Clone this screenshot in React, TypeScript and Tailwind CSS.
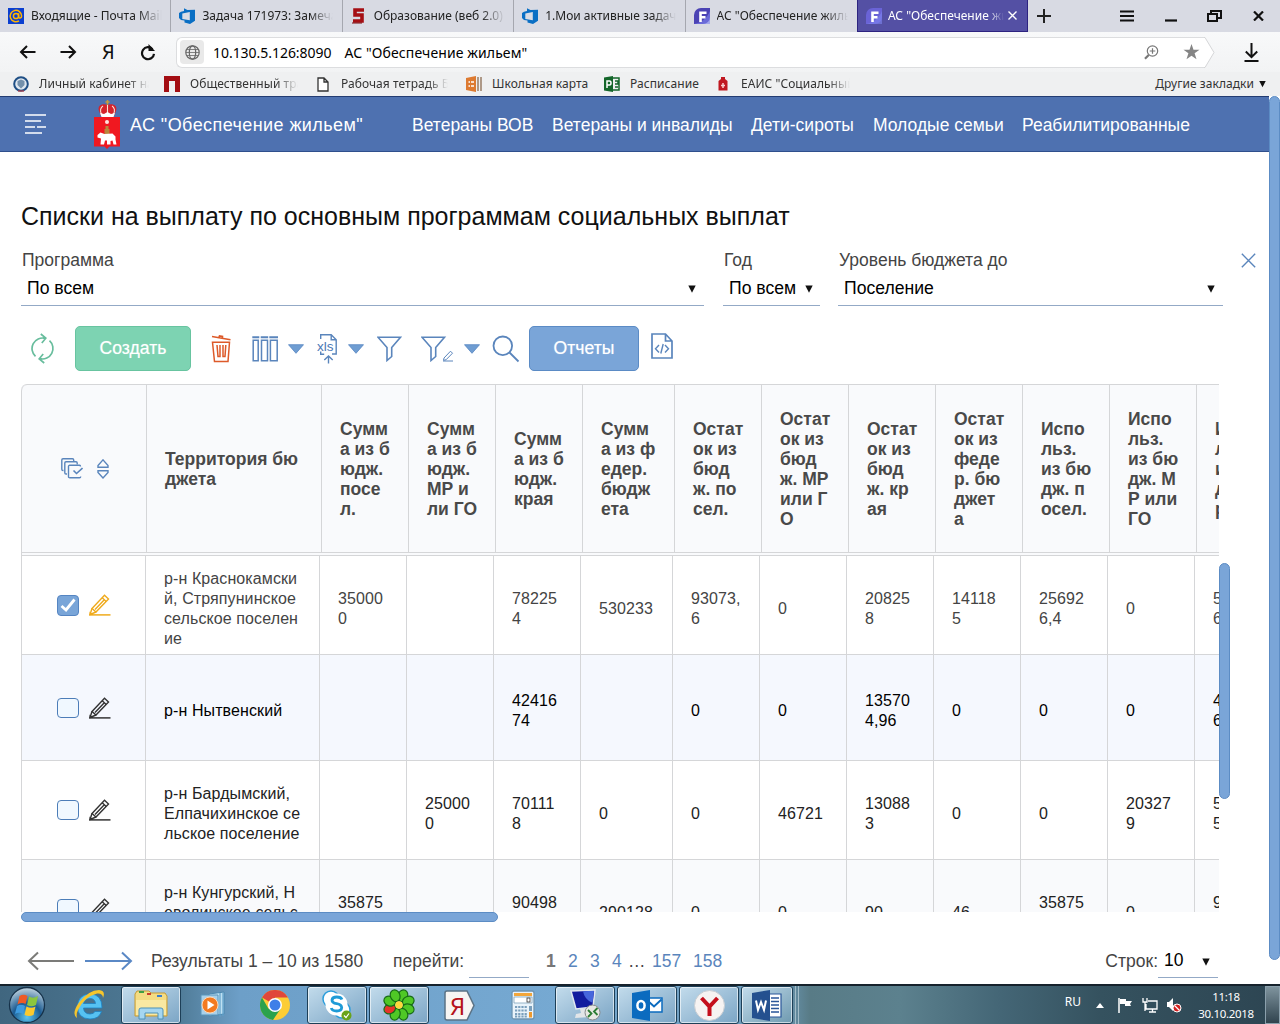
import React from 'react';

type IconProps = { className?: string };

/* ---------- browser icons ---------- */

const MailIcon = () => (
  <svg width="16" height="16" viewBox="0 0 16 16" className="shrink-0">
    <rect width="16" height="16" fill="#0b3fd0" />
    <g fill="none" stroke="#ffb400" strokeWidth="1.5">
      <circle cx="8" cy="8" r="2.6" />
      <path d="M10.6 5.3v3.6c0 1.6 3 1.6 3-1A5.7 5.7 0 1 0 11 12.8" />
    </g>
  </svg>
);

const DevopsIcon = () => (
  <svg width="16" height="16" viewBox="0 0 16 16" className="shrink-0">
    <path d="M0 5l2-1.200 3-.8V.3L8.500 2 16 1.800v11L11 16l-5.500-1.500v-2L2 12 0 10z" fill="#0a6fc4" />
    <path d="M3.300 5.500L10.800 4v8.300l-7.500-1.200z" fill="#dadde5" />
  </svg>
);

const FiveIcon = () => (
  <svg width="16" height="16" viewBox="0 0 16 16" className="shrink-0">
    <path d="M13 2H4v5h7v6H2" fill="none" stroke="#a50f14" strokeWidth="3.6" />
    <path d="M1 15h10" stroke="#7d0a0e" strokeWidth="1" />
  </svg>
);

const FIcon = ({ active = false }: { active?: boolean }) => (
  <svg width="16" height="16" viewBox="0 0 16 16" className="shrink-0">
    <path d="M0 16V7a7 7 0 0 1 7-7h9v9a7 7 0 0 1-7 7z" fill={active ? '#6a63d6' : '#4b43b4'} />
    <path d="M0 16c6-1 13-5 16-13v13z" fill="#7f86f0" opacity="0.6" />
    <path d="M6.500 14V4.700h6M6.500 9.300h5" fill="none" stroke="#fff" strokeWidth="2.600" />
  </svg>
);

const CloseX = ({ className = '' }: IconProps) => (
  <svg width="9" height="9" viewBox="0 0 9 9" className={className}>
    <path d="M.5.5l8 8M8.500.5l-8 8" stroke="currentColor" strokeWidth="1.400" vectorEffect="non-scaling-stroke" />
  </svg>
);

const ArrowLeft = () => (
  <svg width="17" height="14" viewBox="0 0 17 14"><path d="M16.500 7H2M8 1L2 7l6 6" fill="none" stroke="#111" strokeWidth="2" /></svg>
);
const ArrowRight = () => (
  <svg width="17" height="14" viewBox="0 0 17 14"><path d="M.5 7H15M9 1l6 6-6 6" fill="none" stroke="#111" strokeWidth="2" /></svg>
);
const Reload = () => (
  <svg width="16" height="17" viewBox="0 0 16 17">
    <path d="M12.500 5.200A6 6 0 1 0 14 9.800" fill="none" stroke="#111" strokeWidth="2.200" />
    <path d="M8.500 0v7H15z" fill="#111" />
  </svg>
);

/* ---------- app icons ---------- */

const Crest = () => (
  <svg width="27" height="49" viewBox="0 0 27 49">
    <path d="M13.500 0v5M11.500 2h4" stroke="#c99a3a" strokeWidth="1.500" />
    <path d="M5 11C3 6 8 3 13.500 5c5.500-2 10.500 1 8.500 6l-2 5H7z" fill="#d5242c" />
    <path d="M8 15c-3-4-1-8 1-9M19 15c3-4 1-8-1-9M13.500 5v10" stroke="#f6e5d8" strokeWidth="1.100" fill="none" />
    <path d="M6 13l4 1 3.500-2 3.500 2 4-1-1.500 4h-12z" fill="#fff" />
    <path d="M0 17h26v29.500H15.500L13 49l-2.500-2.500H0z" fill="#f01820" />
    <circle cx="13" cy="22" r="2" fill="#ffe3dd" />
    <path d="M11.500 26h3v3h1v6h-5v-6h1z" fill="#b8863c" />
    <path d="M3.500 35l3-2.500 4 1.500 8-.5 3 3v3l1 5h-3l-1-4-2 .5v3.500h-3.500v-4H11l-1 4H6.500l.5-6-3.500-1z" fill="#fff" />
  </svg>
);

const Refresh = () => (
  <svg width="24" height="31" viewBox="0 0 24 31" fill="none" stroke="#68bd9d" strokeWidth="1.700">
    <path d="M4.500 23.300A10.500 10.500 0 0 1 14 5.300M9.800 1l5 4.200-4 4.800" />
    <path d="M18.500 7.700A10.500 10.500 0 0 1 9 25.700M13.200 30l-5-4.200 4-4.800" />
  </svg>
);

const Trash = () => (
  <svg width="21" height="28" viewBox="0 0 21 28" fill="none" stroke="#dd5a2a" strokeWidth="1.600">
    <path d="M1 1.500l18.500 3.300M8 2.500l.5-1.500 3 .500-.2 1.800" />
    <path d="M1.500 7.300h17L17 26.500H3.500zM6 10l1 11.500h2V10M12 10v11.500h2L14.800 10" strokeWidth="1.500" />
  </svg>
);

const Columns = () => (
  <svg width="27" height="26" viewBox="0 0 27 26" fill="none" stroke="#5a85bc" strokeWidth="1.500">
    <path d="M.3 1.200h7M8.700 1.200h7.500M17.300 1.200h8.700" strokeWidth="1.900" />
    <path d="M1.200 4.200h5v20.600h-5zM9.500 4.200h6v20.600h-6zM18.400 4.200h6.800v20.600h-6.800z" />
  </svg>
);

const Caret = ({ className = '' }: IconProps) => (
  <svg width="16" height="10" viewBox="0 0 16 10" className={className}>
    <path d="M.5.700h15L8 9.300z" fill="#6f9dd2" stroke="#5585c2" strokeWidth=".8" />
  </svg>
);

const Xls = () => (
  <svg width="22" height="30" viewBox="0 0 22 30" fill="none" stroke="#5a85bc" strokeWidth="1.400" overflow="visible">
    <path d="M3.700 5V.700h10.500l5 5V20H15M3.700 17.500v2.800h3.500M14.200.700v5h5" />
    <path d="M11.500 29.500v-7.500M7.300 26l4.200-4 4.200 4" />
    <text x="0" y="16.500" fontSize="13.500" fontFamily="Liberation Sans, sans-serif" fill="#4c79b5" stroke="none">xls</text>
  </svg>
);

const Filter = () => (
  <svg width="25" height="26" viewBox="0 0 25 26" fill="none" stroke="#5a85bc" strokeWidth="1.600">
    <path d="M1 1.200h22.500L14.700 11.500v9L10 24.500v-13z" />
  </svg>
);

const FilterEdit = () => (
  <svg width="33" height="26" viewBox="0 0 33 26" fill="none" stroke="#5a85bc" strokeWidth="1.600">
    <path d="M1 1.200h22.500L14.700 11.500v9L10 24.500v-13z" />
    <path d="M23 22l6.500-6.800 2 2-6.500 6.600-2.500.5zM22 25h10" strokeWidth="1" />
  </svg>
);

const Search = () => (
  <svg width="28" height="28" viewBox="0 0 28 28" fill="none" stroke="#5a85bc" strokeWidth="1.800">
    <circle cx="10.800" cy="10.800" r="9.300" />
    <path d="M17.500 17.500l9 9" />
  </svg>
);

const CodeFile = () => (
  <svg width="23" height="27" viewBox="0 0 23 27" fill="none" stroke="#5a85bc" strokeWidth="1.700">
    <path d="M1 1h13.500l6.500 7v17H1zM14.500 1v7H21" />
    <path d="M8 12l-3.500 3.800L8 19.500M14 12l3.500 3.800L14 19.500M12.200 11l-2.400 9.500" strokeWidth="1.400" />
  </svg>
);

const Stack = () => (
  <svg width="22" height="21" viewBox="0 0 22 21" fill="none" stroke="#5a85bc" strokeWidth="1.400">
    <path d="M2.500 12.500H2a1.200 1.200 0 0 1-1.200-1.200V2A1.200 1.200 0 0 1 2 .800h9.500A1.200 1.200 0 0 1 12.700 2v1" />
    <path d="M6 16H5a1.200 1.200 0 0 1-1.200-1.200V5A1.200 1.200 0 0 1 5 3.800h10A1.200 1.200 0 0 1 16.200 5v1.500" />
    <path d="M19.500 8.500A1.200 1.200 0 0 0 18.500 7.300H9A1.200 1.200 0 0 0 7.500 8.500v10A1.200 1.200 0 0 0 9 19.800h9.500a1.200 1.200 0 0 0 1.200-1.200" />
    <path d="M12.500 12.500l3 3 6-5.500" strokeWidth="1.600" />
  </svg>
);

const Sort = () => (
  <svg width="12" height="20" viewBox="0 0 12 20" fill="none" stroke="#5a85bc" strokeWidth="1.400">
    <path d="M1 8.300V6.500L6 .900l5 5.600v1.800zM1 11.700v1.800L6 19l5-5.500v-1.800z" />
  </svg>
);

const Pencil = ({ className = '' }: IconProps) => (
  <svg width="22" height="22" viewBox="0 0 22 22" fill="none" stroke="currentColor" strokeWidth="1.400" className={className}>
    <path d="M3 14.500L15.500 1.200l4 3.800L7 18zM13.200 3.700l4 3.800M6 15.500L15.300 5.800" />
    <path d="M3 14.500l-2 6 6-2.500" />
    <path d="M.5 20.900h21" strokeWidth="1.500" />
    <path d="M.5 17.500v3.500h4z" fill="currentColor" stroke="none" />
  </svg>
);

const SmallTriangle = ({ className = '' }: IconProps) => (
  <svg width="8" height="8" viewBox="0 0 8 8" className={className}><path d="M.3.500h7.400L4 7.800z" fill="#111" /></svg>
);

/* ---------- browser chrome ---------- */

const tabs = [
  { icon: <MailIcon />, text: 'Входящие - Почта Mail.Ru' },
  { icon: <DevopsIcon />, text: 'Задача 171973: Замечания' },
  { icon: <FiveIcon />, text: 'Образование (веб 2.0)' },
  { icon: <DevopsIcon />, text: '1.Мои активные задачи' },
  { icon: <FIcon />, text: 'АС "Обеспечение жильем"' },
];

const TabStrip = () => (
  <div className="flex h-8 bg-[#d8dae3] text-[12px] text-[#222]">
    {tabs.map((t, i) => (
      <div key={i} className={`flex w-[171.400px] items-center overflow-hidden pl-2 ${i < 4 ? 'border-r border-[#a5a7af]' : ''}`}>
        {t.icon}
        <span className="ml-[7px] w-[131px] overflow-hidden whitespace-nowrap [mask-image:linear-gradient(to_right,#000_82%,transparent)]">{t.text}</span>
      </div>
    ))}
    <div className="flex w-[171px] items-center border border-t-0 border-[#2d2380] bg-[#5450a4] pl-2 text-white">
      <FIcon active />
      <span className="ml-[6px] w-[116px] overflow-hidden whitespace-nowrap [mask-image:linear-gradient(to_right,#000_86%,transparent)]">АС "Обеспечение жильем"</span>
      <CloseX className="ml-[4px]" />
    </div>
    <div className="flex flex-1 items-center justify-between pr-4 pl-[9px] text-[#111]">
      <svg width="14" height="14" viewBox="0 0 14 14"><path d="M7 0v14M0 7h14" stroke="#222" strokeWidth="2" /></svg>
      <div className="flex items-center">
        <svg width="14" height="12" viewBox="0 0 14 12"><path d="M0 1.500h14M0 6h14M0 10.500h14" stroke="#111" strokeWidth="2" /></svg>
        <svg width="12" height="12" viewBox="0 0 12 12" className="ml-[31px]"><path d="M0 10.500h12" stroke="#111" strokeWidth="2.200" /></svg>
        <svg width="15" height="12" viewBox="0 0 15 12" className="ml-[30px]" fill="none" stroke="#111" strokeWidth="2"><path d="M1 4h9v7H1zM4 4V1h10v7h-4" /></svg>
        <svg width="11" height="10" viewBox="0 0 11 10" className="ml-[31px]"><path d="M1 .5l9 9M10 .5l-9 9" stroke="#111" strokeWidth="2.200" /></svg>
      </div>
    </div>
  </div>
);

const AddressBar = () => (
  <div className="flex h-10 items-center bg-gradient-to-b from-[#f8f9fa] to-[#f2f3f4] pl-[19px]">
    <ArrowLeft />
    <div className="w-[24px]" />
    <ArrowRight />
    <span className="ml-[25px] w-[12px] text-[20px] leading-none text-[#111]">Я</span>
    <div className="w-[26px]" />
    <Reload />
    <div className="ml-5 flex h-[31px] flex-1 items-center rounded-l-md border border-r-0 border-[#dcdddf] bg-white pl-[3px]">
      <div className="flex size-6 items-center justify-center rounded-sm bg-[#e9e9e9]">
        <svg width="15" height="15" viewBox="0 0 15 15" fill="none" stroke="#666" strokeWidth="1.200">
          <circle cx="7.500" cy="7.500" r="6.700" /><ellipse cx="7.500" cy="7.500" rx="3.200" ry="6.700" /><path d="M1 7.500h13M2 4.500h11M2 10.500h11" strokeWidth=".8" />
        </svg>
      </div>
      <span className="ml-[9px] text-[14px] tracking-[-0.04px] text-black">10.130.5.126:8090</span>
      <span className="ml-[13px] text-[14px] tracking-[0.1px] text-black">АС "Обеспечение жильем"</span>
      <svg width="15" height="15" viewBox="0 0 15 15" className="ml-auto" fill="none" stroke="#777" strokeWidth="1.200">
        <circle cx="8.500" cy="6" r="5.200" /><path d="M8.500 3.200v5.600M5.700 6h5.600" /><path d="M4.700 10L1 13.800" strokeWidth="2.200" />
      </svg>
      <svg width="17" height="16" viewBox="0 0 17 16" className="mr-[4px] ml-6"><path d="M8.500 0l2 5.700h6l-4.900 3.600 1.900 6-5-3.600-5 3.600 1.900-6L.5 5.700h6z" fill="#858585" /></svg>
    </div>
    <svg width="11" height="31" viewBox="0 0 11 31"><path d="M0 .5h1l9 15-9 15H0" fill="#fff" stroke="#d4d5d7" /></svg>
    <svg width="15" height="19" viewBox="0 0 15 19" className="mr-[21px] ml-[29px]" fill="none" stroke="#111" strokeWidth="2"><path d="M7.500 0v14M1.800 8.500l5.700 5.700 5.700-5.700M.5 18h14" /></svg>
  </div>
);

const Bookmark = ({ icon, text, className, fade }: { icon: React.ReactNode; text: string; className: string; fade?: boolean }) => (
  <div className={`flex shrink-0 items-center ${className}`}>
    {icon}
    <span className={`flex-1 overflow-hidden whitespace-nowrap ${fade ? '[mask-image:linear-gradient(to_right,#000_80%,transparent)]' : ''}`}>{text}</span>
  </div>
);

const Bookmarks = () => (
  <div className="flex h-6 items-center bg-[#eff0f1] pl-[13px] text-[12px] tracking-[0.05px] text-[#333]">
    <Bookmark fade className="w-[151px] gap-[10px] pr-[15px]" text="Личный кабинет налог" icon={
      <svg width="16" height="16" viewBox="0 0 16 16"><circle cx="8" cy="8" r="6.800" fill="#dfe7ef" stroke="#1f4f85" strokeWidth="2" /><path d="M4.500 5l3.500-1.500L11.500 5v4L8 12.500 4.500 9z" fill="#7390ab" /><path d="M5 15h6" stroke="#c33" /></svg>} />
    <Bookmark fade className="w-[152px] gap-[10px] pr-[18px]" text="Общественный транс" icon={
      <svg width="16" height="16" viewBox="0 0 16 16"><path d="M0 0h16v16h-5V5H5v11H0z" fill="#a30d12" /></svg>} />
    <Bookmark fade className="w-[150px] gap-[12px] pr-[18px]" text="Рабочая тетрадь БД" icon={
      <svg width="12" height="15" viewBox="0 0 12 15" className="ml-[1px]" fill="#fff" stroke="#333" strokeWidth="1.300"><path d="M1 1h6l4 4v9H1zM7 1v4h4" /></svg>} />
    <Bookmark className="w-[138px] gap-[10px]" text="Школьная карта" icon={
      <svg width="16" height="16" viewBox="0 0 16 16"><path d="M0 2l10-2v16L0 14z" fill="#dd7a31" /><path d="M2.500 6h1.500M5 6h3M2.500 10h1.500M5 10h3" stroke="#fff" strokeWidth="1.500" /><path d="M12 1v14M15 1v14" stroke="#8b6b50" strokeWidth="1.300" /></svg>} />
    <Bookmark className="w-[114px] gap-[10px]" text="Расписание" icon={
      <svg width="16" height="16" viewBox="0 0 16 16"><path d="M0 1.500L9 0v16l-9-1.500z" fill="#14662a" /><path d="M9 2h6v12H9M11 5h3v3h-3M11 11h3" fill="none" stroke="#14662a" strokeWidth="1.500" /><path d="M3 12V5h2.500q1.500 0 1.500 2T5.500 9H3" fill="none" stroke="#fff" strokeWidth="1.500" /></svg>} />
    <Bookmark fade className="w-[132px] gap-[13px]" text={'ЕАИС "Социальный'} icon={
      <svg width="10" height="16" viewBox="0 0 10 16"><path d="M3 1h4v2l2.500 2v9.500h-9V5L3 3z" fill="#c01820" /><path d="M5 7v5M3 9.500h4" stroke="#f8d0d0" strokeWidth="1.500" /></svg>} />
    <span className="mr-[5px] ml-auto">Другие закладки</span>
    <SmallTriangle className="mr-[14px] w-[7px]" />
  </div>
);

/* ---------- application ---------- */

const AppHeader = () => (
  <header className="flex h-14 w-[1269px] items-center border-t border-b border-t-[#233c72] border-b-[#2f4f8c] bg-[#4e71b0] text-[17.500px] text-white">
    <svg width="22" height="20" viewBox="0 0 22 20" className="ml-[25px]" stroke="#fff" strokeWidth="1.500"><path d="M0 1h21M0 7h16M0 13h10M12 13h9M0 19h17" /></svg>
    <div className="ml-[47px]"><Crest /></div>
    <span className="mt-[2px] ml-[9px] w-[282px] text-[18px] tracking-[0.42px]">АС "Обеспечение жильем"</span>
    <nav className="mt-[2px] flex whitespace-nowrap">
      <span className="w-[140px]">Ветераны ВОВ</span>
      <span className="w-[199px]">Ветераны и инвалиды</span>
      <span className="w-[122px]">Дети-сироты</span>
      <span className="w-[149px]">Молодые семьи</span>
      <span>Реабилитированные</span>
    </nav>
  </header>
);

const Field = ({ label, value, className, arrow }: { label: string; value: string; className: string; arrow: string }) => (
  <div className={className}>
    <div className="h-[22px] pl-px text-[17.500px] leading-[22px] whitespace-nowrap text-[#444]">{label}</div>
    <div className="mt-[2px] flex h-[33px] items-center border-b border-[#93a9c6] pb-[2px] pl-[6px] text-[17.600px] text-black">
      <span>{value}</span>
      <SmallTriangle className={`mt-[2px] ml-auto ${arrow}`} />
    </div>
  </div>
);

const Toolbar = () => (
  <div className="mt-5 ml-[31px] flex h-[45px] items-center">
    <Refresh />
    <button className="ml-5 h-[45px] w-[116px] rounded-[5px] border border-[#68c4a0] bg-[#7dd3b2] text-[17.600px] text-white [text-shadow:0_0_1px_rgba(255,255,255,0.5)]">Создать</button>
    <div className="ml-5"><Trash /></div>
    <div className="ml-5"><Columns /></div>
    <Caret className="ml-[9px]" />
    <div className="ml-[13px]"><Xls /></div>
    <Caret className="ml-[9px]" />
    <div className="ml-[13px]"><Filter /></div>
    <div className="ml-[19px]"><FilterEdit /></div>
    <Caret className="ml-[10px]" />
    <div className="ml-[12px]"><Search /></div>
    <button className="ml-[9px] h-[45px] w-[110px] rounded-[5px] border border-[#5b8bc5] bg-[#7aa5d8] text-[17.600px] text-white [text-shadow:0_0_1px_rgba(255,255,255,0.5)]">Отчеты</button>
    <div className="mb-[5px] ml-[12px]"><CodeFile /></div>
  </div>
);

const headers = [
  'Территория бю\nджета',
  'Сумм\nа из б\nюдж.\nпосе\nл.',
  'Сумм\nа из б\nюдж.\nМР и\nли ГО',
  'Сумм\nа из б\nюдж.\nкрая',
  'Сумм\nа из ф\nедер.\nбюдж\nета',
  'Остат\nок из\nбюд\nж. по\nсел.',
  'Остат\nок из\nбюд\nж. МР\nили Г\nО',
  'Остат\nок из\nбюд\nж. кр\nая',
  'Остат\nок из\nфеде\nр. бю\nджет\nа',
  'Испо\nльз.\nиз бю\nдж. п\nосел.',
  'Испо\nльз.\nиз бю\nдж. М\nР или\nГО',
  'Испо\nльз.\nиз бю\nдж. к\nрая',
];

type Row = { style: string; cell: string; checked?: boolean; cells: string[] };

const rows: Row[] = [
  { style: 'h-[99px] bg-white text-[#444]', cell: 'pt-[8px]', checked: true, cells: ['р-н Краснокамски\nй, Стряпунинское\nсельское поселен\nие', '35000\n0', '', '78225\n4', '530233', '93073,\n6', '0', '20825\n8', '14118\n5', '25692\n6,4', '0', '57399\n6'] },
  { style: 'h-[106px] bg-[#f5f8fe] text-black', cell: 'pt-[6px]', cells: ['р-н Нытвенский', '', '', '42416\n74', '', '0', '0', '13570\n4,96', '0', '0', '0', '41059\n69,04'] },
  { style: 'h-[99px] bg-white text-[#222]', cell: 'pt-[8px]', cells: ['р-н Бардымский,\nЕлпачихинское се\nльское поселение', '', '25000\n0', '70111\n8', '0', '0', '46721', '13088\n3', '0', '0', '20327\n9', '57023\n5'] },
  { style: 'h-[99px] bg-[#f9fafc] text-[#222]', cell: 'pt-[8px]', cells: ['р-н Кунгурский, Н\nеволинское сельс\nкое поселение', '35875\n0', '', '90498\n0', '290128', '0', '0', '90', '46', '35875\n0', '0', '90489\n0'] },
];

const Table = () => (
  <div className="relative mt-[13px] ml-[21px] h-[538px] w-[1209px]">
    <div className="h-[528px] w-[1198px] overflow-hidden">
      <div className="grid h-[169px] w-[1270px] grid-cols-[125px_175px_87px_87px_87px_92px_87px_87px_87px_87px_87px_87px_95px] rounded-tl-md border-t border-b border-[#d5d6d8] bg-[#f9fafc] text-[17.500px] leading-5 font-bold text-[#494949]">
        <div className="flex items-center rounded-tl-md border-l border-[#d5d6d8] pl-[39px]">
          <Stack />
          <div className="ml-[14px]"><Sort /></div>
        </div>
        {headers.map((h, i) => (
          <div key={i} className="flex items-center border-l border-[#d5d6d8] pl-[18px] whitespace-pre">{h}</div>
        ))}
      </div>
      <div className="h-[2px] border-l border-[#d5d6d8] bg-[#f9fafc]" />
      <div className="w-[1270px] border-t border-[#d5d6d8] text-[16px] leading-5 tracking-[0.1px]">
        {rows.map((r, i) => (
          <div key={i} className={`grid grid-cols-[124px_174px_87px_87px_87px_92px_87px_87px_87px_87px_87px_87px_97px] border-b border-[#d5d6d8] ${r.style}`}>
            <div className="flex items-center border-l border-[#d5d6d8] pl-[35px]">
              {r.checked ? (
                <div className="flex h-[21px] w-[22px] items-center justify-center rounded-[4px] border border-[#5585c2] bg-[#79a5d8]">
                  <svg width="16" height="14" viewBox="0 0 16 14"><path d="M1.500 8l4.500 4L14.500 1.500" fill="none" stroke="#fff" strokeWidth="2.800" /></svg>
                </div>
              ) : (
                <div className="h-[20px] w-[22px] rounded-[4px] border border-[#4c7db8] bg-[#f0f8ff]" />
              )}
              <Pencil className={`ml-[10px] ${r.checked ? 'text-[#efaa1c]' : 'text-[#333]'}`} />
            </div>
            {r.cells.map((c, j) => (
              <div key={j} className={`flex items-center border-l border-[#d5d6d8] pl-[18px] whitespace-pre ${r.cell}`}>{c}</div>
            ))}
          </div>
        ))}
      </div>
    </div>
    <div className="absolute top-[179px] right-0 h-[236px] w-[11px] rounded-full border border-[#5c8cc4] bg-[#7aa5d8]" />
    <div className="absolute bottom-0 left-0 h-[10px] w-[477px] rounded-full border border-[#5c8cc4] bg-[#7aa5d8]" />
  </div>
);

const Pager = () => (
  <div className="mt-[26px] ml-[27px] flex h-[30px] items-center pb-[4px] text-[17.500px] text-[#444]">
    <svg width="48" height="20" viewBox="0 0 48 20" fill="none" stroke="#7b7b78" strokeWidth="2"><path d="M47 10H2M11 1.500L2 10l9 8.500" /></svg>
    <svg width="48" height="20" viewBox="0 0 48 20" fill="none" stroke="#5a88c5" strokeWidth="2" className="ml-[10px]"><path d="M0 10h45M37 1.500l9 8.500-9 8.500" /></svg>
    <span className="ml-[18px] w-[242px] whitespace-nowrap">Результаты 1 – 10 из 1580</span>
    <span className="w-[76px]">перейти:</span>
    <div className="mt-[32px] h-px w-[60px] bg-[#93a9c6]" />
    <span className="ml-[17px] w-[22px] font-bold text-[#777]">1</span>
    <div className="flex text-[#5a85bc]">
      <span className="w-[22px]">2</span><span className="w-[22px]">3</span><span className="w-[16px]">4</span>
      <span className="w-[24px] text-[#444]">…</span><span className="w-[41px]">157</span><span>158</span>
    </div>
    <span className="ml-auto">Строк:</span>
    <div className="mr-[62px] flex h-[34px] w-[60px] items-center border-b border-[#93a9c6] pl-[6px] text-black">
      10<SmallTriangle className="mt-[2px] mr-[8px] ml-auto" />
    </div>
  </div>
);

/* ---------- taskbar ---------- */

const Slot = ({ children, open }: { children: React.ReactNode; open?: boolean }) => (
  <div className={`mr-[2px] flex h-[38px] w-[60px] items-center justify-center rounded-[3px] ${open ? 'border border-[#1d3f57] bg-gradient-to-br from-[#c3dcec] to-[#7ba5c5] shadow-[inset_0_0_0_1px_rgba(255,255,255,0.6)]' : ''}`}>{children}</div>
);

const Taskbar = () => (
  <div className="flex h-10 items-start border-t-2 border-t-[#16222c] bg-[linear-gradient(to_right,#40667f_0,#507c98_180px,#6d9fc8_240px,#76a9d2_560px,#6d9ab8_780px,#587b86_810px,#5c818e_900px,#446676_1000px,#35525f_1100px,#2d4552_1280px)] text-white">
    <div className="flex h-[38px] w-[59px] items-center pl-2">
      <svg width="38" height="38" viewBox="0 0 38 38">
        <defs><radialGradient id="orb" cx="0.5" cy="0.85" r="0.8"><stop offset="0" stopColor="#5cc5ef" /><stop offset="0.5" stopColor="#1c5c93" /><stop offset="1" stopColor="#b3c9d8" /></radialGradient></defs>
        <circle cx="19" cy="19" r="17.500" fill="url(#orb)" stroke="#16324a" strokeWidth="1.300" />
        <path d="M11.500 10q4-2.500 8 0l-2 8q-4-2-8 .5z" fill="#ee5a26" />
        <path d="M21 10.500q4 2.500 9-.5l-2 9q-4.500 2.500-9 0z" fill="#8cc63e" />
        <path d="M9 20q4-2.500 8 0l-2 8q-4-2.500-8 0z" fill="#3e9be0" />
        <path d="M18.500 20.500q4.500 2.500 9 0l-2 8.500q-4.500 2-9 0z" fill="#fcc92d" />
      </svg>
    </div>
    <Slot>
      <svg width="34" height="32" viewBox="0 0 34 32">
        <path d="M30 19H11.500q.5 6 6.500 6 3.500 0 5-2.500h6.500Q27 30 18 30 5.500 29.500 5.500 17.500 6 5.500 18 5 30 5 30 19zm-6.500-4.500q-.5-5-5.700-5-5.300.2-6.300 5z" fill="#56c2f2" stroke="#1d83c4" strokeWidth=".8" />
        <path d="M5 29Q-1 25 7 13.500 17 1 27 1q7 .5 4 8 0-5-6-4.500Q12 8 6 21q-2 4-1 8z" fill="#f7c62c" />
      </svg>
    </Slot>
    <Slot open>
      <svg width="34" height="30" viewBox="0 0 34 30">
        <path d="M1 4l2-3h12l2 2h14l2 3v20H1z" fill="#f4dc83" stroke="#c69a34" />
        <path d="M5 2h5" stroke="#3f9f43" strokeWidth="2" /><path d="M13 4h4" stroke="#cc3b2c" strokeWidth="2" /><path d="M23 6h5" stroke="#3b7ecb" strokeWidth="2" />
        <path d="M2 10h30v15H2z" fill="#f9e8a2" />
        <path d="M5 29v-9q0-2 2-2h20q2 0 2 2v9h-5v-6H11v6z" fill="#a5d6f0" stroke="#4d91b8" />
      </svg>
    </Slot>
    <Slot>
      <svg width="28" height="28" viewBox="0 0 28 28">
        <path d="M10 3l15-2v22l-15 2z" fill="#bde0f2" stroke="#4b88b0" /><path d="M21 2v24M24 2v23" stroke="#5f9fc8" strokeWidth="1.200" /><path d="M2 4h17v20H2z" fill="#a9d1ea" stroke="#5995ba" />
        <circle cx="11" cy="14" r="8" fill="#f37a20" stroke="#fbd9ba" /><path d="M8.500 9.500l7 4.500-7 4.500z" fill="#fff" />
      </svg>
    </Slot>
    <Slot>
      <svg width="30" height="30" viewBox="0 0 30 30">
        <circle cx="15" cy="15" r="15" fill="#fccd35" />
        <path d="M15 15L2 7.500A15 15 0 0 1 28 7.500H15z" fill="#e0473a" />
        <path d="M2 7.500A15 15 0 0 0 13 29.900L20.500 19 15 15 8.500 18.800z" fill="#2ba24c" />
        <circle cx="15" cy="15" r="7" fill="#fff" /><circle cx="15" cy="15" r="5.500" fill="#3f7fe8" />
      </svg>
    </Slot>
    <Slot open>
      <svg width="30" height="31" viewBox="0 0 30 31">
        <circle cx="9" cy="9" r="8" fill="#fff" stroke="#2b9ddb" strokeWidth="1.500" /><circle cx="20" cy="20" r="8" fill="#fff" stroke="#2b9ddb" strokeWidth="1.500" /><circle cx="14.500" cy="14.500" r="11" fill="#fff" />
        <path d="M20 9.500q-1-2.500-5.300-2.500t-4.700 3q0 3 4.700 3.700t5 4q-.3 3.300-5 3.300t-5.400-3" fill="none" stroke="#1e9bd7" strokeWidth="2.800" />
        <circle cx="24.500" cy="25.500" r="5" fill="#6aa31a" /><path d="M22 25.500l2 2 3-4" stroke="#fff" strokeWidth="1.200" fill="none" />
      </svg>
    </Slot>
    <Slot open>
      <svg width="34" height="34" viewBox="0 0 34 34">
        {[0, 45, 90, 135, 180, 225, 270, 315].map((a) => (
          <ellipse key={a} cx="17" cy="7" rx="4.800" ry="6" transform={`rotate(${a + 22.5} 17 17)`} fill={a === 225 ? '#e6342b' : '#4fc826'} stroke="#176b15" strokeWidth="1.200" />
        ))}
        <circle cx="17" cy="17" r="3.800" fill="#ffd83b" />
      </svg>
    </Slot>
    <Slot>
      <div className="relative mr-[1px] h-[31px] w-[33px]">
        <svg width="33" height="31" viewBox="0 0 33 31" className="absolute inset-0"><path d="M3 1h20l7 14.500L23 30H3q-2 0-2-2V3q0-2 2-2z" fill="#f7f5f3" stroke="#5b7386" strokeWidth="1.500" /></svg>
        <span className="absolute top-[1px] left-[6px] text-[24px] leading-[29px] text-[#b5121b]">Я</span>
      </div>
    </Slot>
    <Slot>
      <svg width="24" height="30" viewBox="0 0 24 30">
        <rect x="1" y="1" width="22" height="28" rx="2" fill="#e9f3fa" stroke="#6d94b2" strokeWidth="1.300" /><path d="M3 3h18v3H3z" fill="#f3a63a" /><path d="M3 7h18v6H3z" fill="#fff" stroke="#7ea3bc" strokeWidth=".8" />
        <path d="M4 17h12M4 20.500h12M4 24h12M4 26.500h12" stroke="#7a9fbc" strokeWidth="2" strokeDasharray="2.200 1" /><path d="M18 16h3v5h-3z" fill="#7a9fbc" /><path d="M18 22h3v5.500h-3z" fill="#ed992f" />
        <rect x="16" y="8" width="3" height="4" fill="none" stroke="#333" strokeWidth=".8" />
      </svg>
    </Slot>
    <Slot open>
      <svg width="32" height="32" viewBox="0 0 32 32">
        <path d="M2 2l24-1-2 17L7 20z" fill="#131c9e" stroke="#e2e8ef" strokeWidth="1.500" /><path d="M14 2.300l11-.5-1.500 12q-8-3-9.500-11.500z" fill="#4666dc" /><path d="M11 20l7-1 1 5 3 1-1 3-15 1 1-4 5-1z" fill="#e2e5e8" />
        <circle cx="23.500" cy="23.500" r="7.500" fill="#e8e8e3" stroke="#85898c" /><path d="M19 21l3.500 3.500L19 28M28.500 19L25 22.500l3.500 3.500" fill="none" stroke="#2c7c33" strokeWidth="1.800" />
      </svg>
    </Slot>
    <Slot open>
      <svg width="32" height="31" viewBox="0 0 32 31">
        <path d="M14 8h17v14H14z" fill="#fff" stroke="#0b6bbf" strokeWidth="1.500" /><path d="M17 11l6 5.500 7.500-7" fill="none" stroke="#0b6bbf" strokeWidth="2" />
        <path d="M1 3l18-3v31L1 28z" fill="#0b6bbf" /><ellipse cx="10" cy="15.500" rx="3.600" ry="4.500" fill="none" stroke="#fff" strokeWidth="2.500" />
      </svg>
    </Slot>
    <Slot open>
      <svg width="31" height="31" viewBox="0 0 31 31"><circle cx="15.500" cy="15.500" r="15" fill="#f6f3f2" stroke="#c9ced3" /><path d="M7.500 8l8 8.500 8-8.500M15.500 15v11" fill="none" stroke="#c40f1c" strokeWidth="4" /></svg>
    </Slot>
    <div className="flex h-[38px] w-[52px] items-center justify-center rounded-[3px] border border-[#1d3f57] bg-gradient-to-br from-[#c3dcec] to-[#6f9ab0] shadow-[inset_0_0_0_1px_rgba(255,255,255,0.6)]">
      <svg width="30" height="31" viewBox="0 0 30 31">
        <path d="M16 4h13v23H16z" fill="#fff" stroke="#2a5699" strokeWidth="1.200" /><path d="M19 8h8M19 11.500h8M19 15h8M19 18.500h8M19 22h8" stroke="#2a5699" strokeWidth="1.300" />
        <path d="M0 3l18-3v31L0 28z" fill="#24508f" /><path d="M4 10.500l2 9.500L9 12l3 8 2-9.500" fill="none" stroke="#fff" strokeWidth="2" />
      </svg>
    </div>
    <div className="h-[38px] w-[3px] border-r border-[#a3bdc9]" /><div className="h-[38px] w-[3px] border-r border-[#a3bdc9]" />
    <span className="mt-[8px] ml-auto text-[12px] leading-4">RU</span>
    <svg width="8" height="5" viewBox="0 0 8 5" className="mt-[17px] ml-[15px]"><path d="M0 5l4-5 4 5z" fill="#fff" /></svg>
    <svg width="16" height="16" viewBox="0 0 16 16" className="mt-[11px] ml-[13px]"><path d="M2 1v15" stroke="#fff" strokeWidth="1.500" /><path d="M3 2h6v2h6l-2 3 1 2H8V7H3z" fill="#fff" /></svg>
    <svg width="16" height="16" viewBox="0 0 16 16" className="mt-[11px] ml-[9px]" fill="none" stroke="#fff" strokeWidth="1.300"><path d="M6 4h9v8H4V7M7 15h7M10.500 12v3M1 1v4h4V1M3 5v9" /></svg>
    <svg width="16" height="16" viewBox="0 0 16 16" className="mt-[11px] ml-[8px]"><path d="M1 5h2l4-4v13l-4-4H1z" fill="#fff" /><circle cx="11" cy="11" r="4" fill="#d32020" stroke="#fff" strokeWidth="1" /><path d="M8.500 8.500l5 5" stroke="#fff" strokeWidth="1.200" /></svg>
    <div className="mt-[2px] mr-[11px] ml-[16px] w-[56px] text-center text-[11.500px] leading-[17px] tracking-[-0.35px]">11:18<br />30.10.2018</div>
    <div className="h-[38px] w-[15px] border border-[#8ba0ac] bg-gradient-to-b from-[#7f949e] to-[#31444f]" />
  </div>
);

export default function App() {
  return (
    <div className="flex h-[1024px] w-[1280px] flex-col overflow-hidden bg-white font-['Noto_Sans',sans-serif]">
      <TabStrip />
      <AddressBar />
      <Bookmarks />
      <div className="relative h-[888px] font-['Liberation_Sans',Arial,sans-serif]">
        <AppHeader />
        <h1 className="mt-[48px] ml-[21px] h-8 text-[25px] leading-8 whitespace-nowrap text-[#111]">Списки на выплату по основным программам социальных выплат</h1>
        <div className="mt-[17px] ml-[21px] flex">
          <Field label="Программа" value="По всем" className="w-[683px]" arrow="mr-[8px]" />
          <Field label="Год" value="По всем" className="ml-[19px] w-[97px]" arrow="mr-[7px]" />
          <Field label="Уровень бюджета до" value="Поселение" className="ml-[18px] w-[385px]" arrow="mr-[8px]" />
          <CloseX className="mt-[4px] ml-[18px] size-[15px] text-[#5a85bc]" />
        </div>
        <Toolbar />
        <Table />
        <Pager />
        <div className="absolute top-0 right-0 h-[864px] w-[11px] rounded-full border border-[#5c8cc4] bg-[#7aa5d8]" />
      </div>
      <Taskbar />
    </div>
  );
}
